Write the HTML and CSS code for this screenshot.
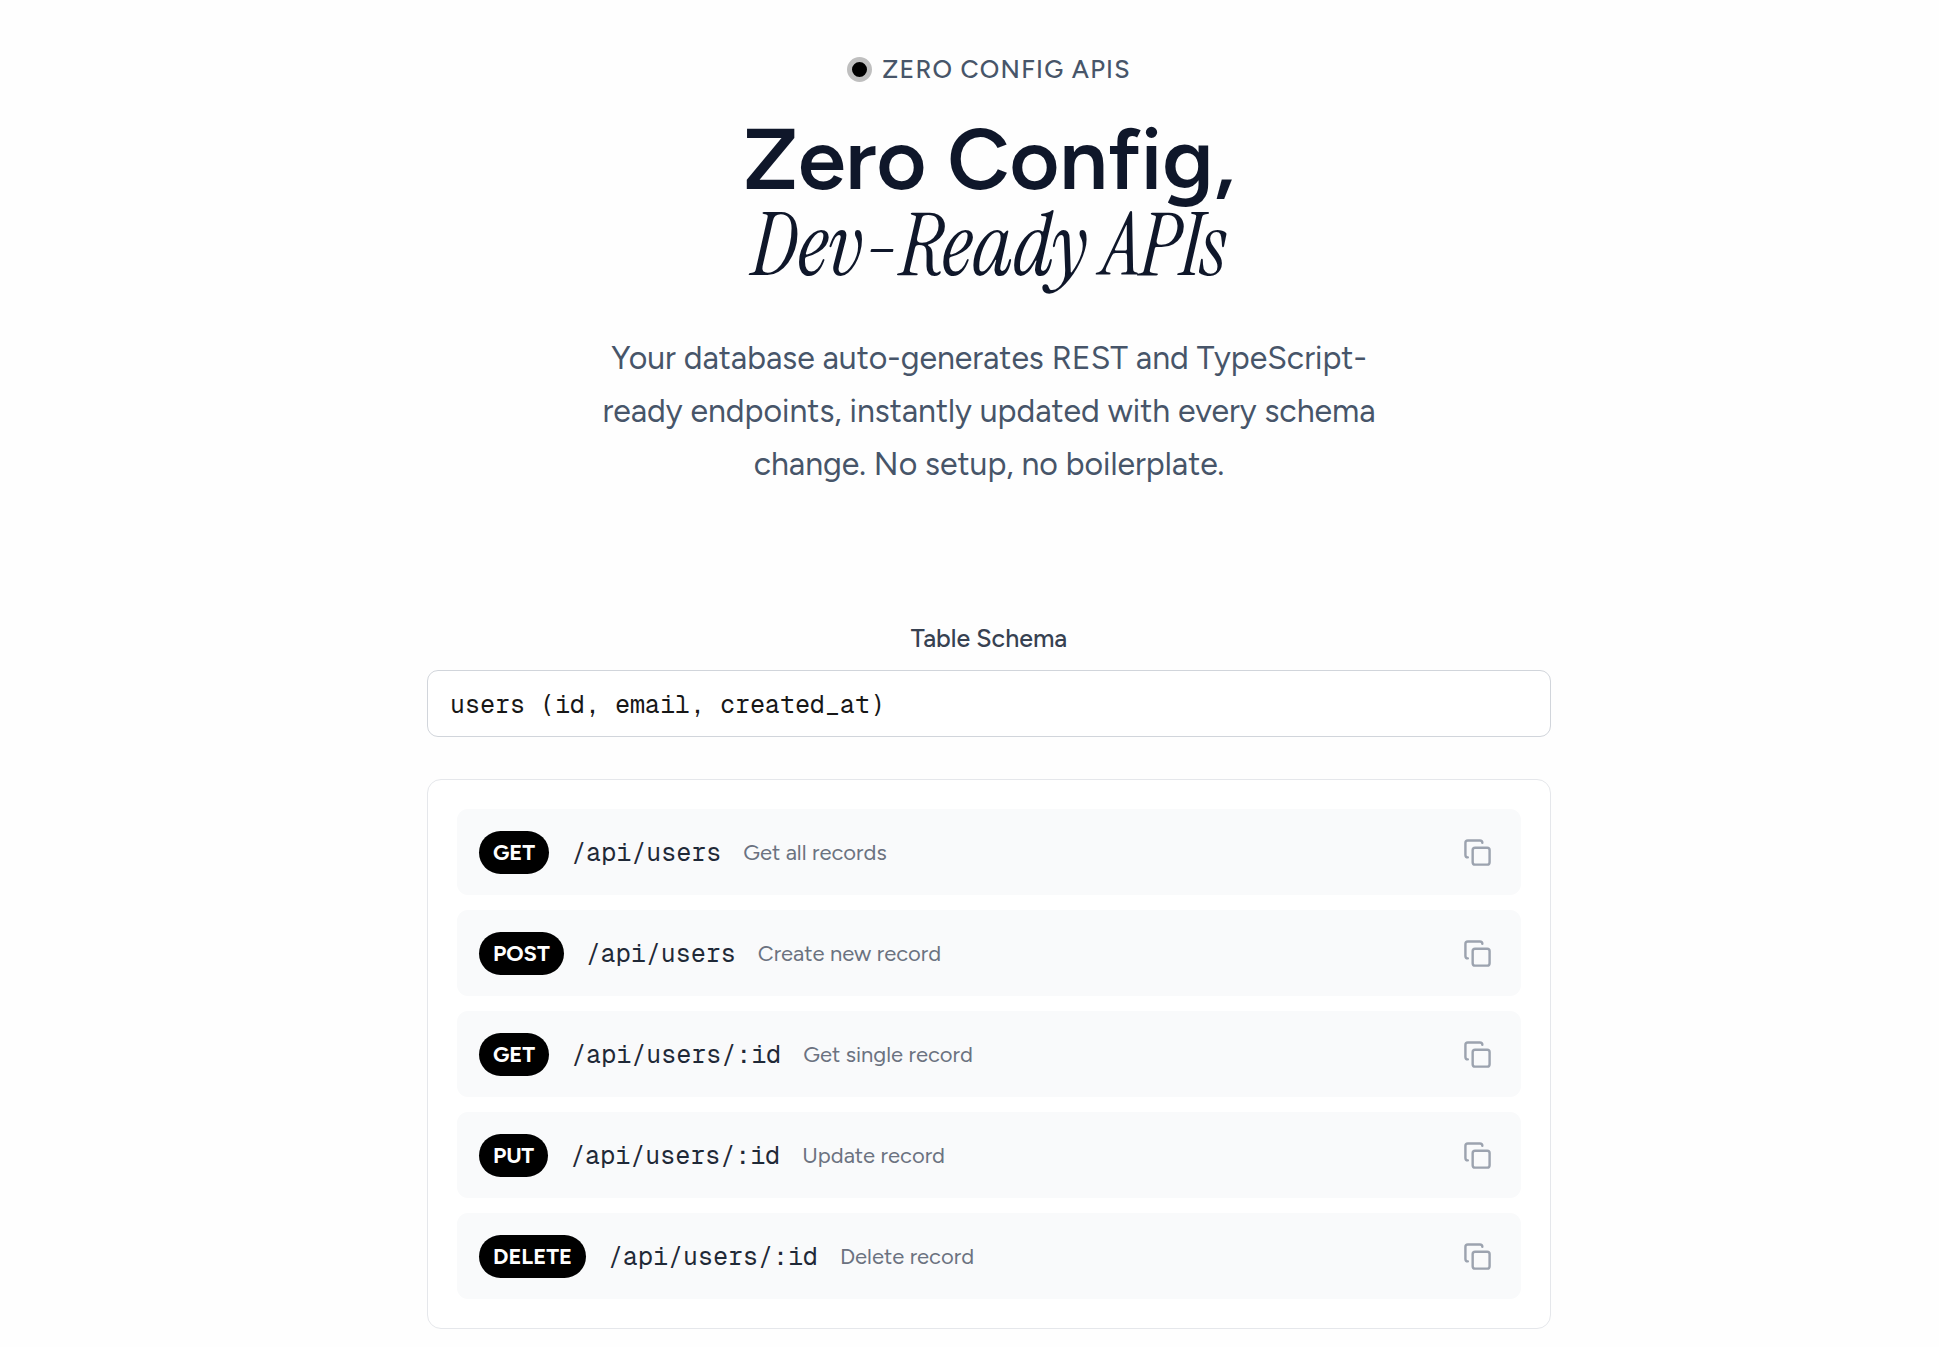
FILE: index.html
```html
<!DOCTYPE html>
<html lang="en">
<head>
    <meta charset="UTF-8">
    <meta name="viewport" content="width=device-width, initial-scale=1.0">
    <title>Zero Config APIs</title>
    <link rel="stylesheet" href="styles.css">
</head>
<body>
    <svg class="sprite" aria-hidden="true">
        <symbol id="icon-copy" viewBox="0 0 24 24">
            <rect x="8" y="8" width="14" height="14" rx="2" ry="2"></rect>
            <path d="M4 16c-1.1 0-2-.9-2-2V4c0-1.1.9-2 2-2h10c1.1 0 2 .9 2 2"></path>
        </symbol>
    </svg>

    <main class="container">
        <header class="hero">
            <p class="eyebrow"><span class="dot"></span>ZERO CONFIG APIS</p>
            <h1 class="title">Zero Config,<br><em>Dev-Ready APIs</em></h1>
            <p class="lead">Your database auto-generates REST and TypeScript-ready endpoints, instantly updated with every schema change. No setup, no boilerplate.</p>
        </header>

        <section class="demo">
            <label class="schema-label" for="schema">Table Schema</label>
            <input class="schema-input" type="text" id="schema" value="users (id, email, created_at)" spellcheck="false">

            <ul class="endpoints">
                <li class="endpoint">
                    <span class="method">GET</span>
                    <code class="path">/api/users</code>
                    <span class="description">Get all records</span>
                    <button class="copy-btn" type="button" aria-label="Copy"><svg class="icon"><use href="#icon-copy"></use></svg></button>
                </li>
                <li class="endpoint">
                    <span class="method">POST</span>
                    <code class="path">/api/users</code>
                    <span class="description">Create new record</span>
                    <button class="copy-btn" type="button" aria-label="Copy"><svg class="icon"><use href="#icon-copy"></use></svg></button>
                </li>
                <li class="endpoint">
                    <span class="method">GET</span>
                    <code class="path">/api/users/:id</code>
                    <span class="description">Get single record</span>
                    <button class="copy-btn" type="button" aria-label="Copy"><svg class="icon"><use href="#icon-copy"></use></svg></button>
                </li>
                <li class="endpoint">
                    <span class="method">PUT</span>
                    <code class="path">/api/users/:id</code>
                    <span class="description">Update record</span>
                    <button class="copy-btn" type="button" aria-label="Copy"><svg class="icon"><use href="#icon-copy"></use></svg></button>
                </li>
                <li class="endpoint">
                    <span class="method">DELETE</span>
                    <code class="path">/api/users/:id</code>
                    <span class="description">Delete record</span>
                    <button class="copy-btn" type="button" aria-label="Copy"><svg class="icon"><use href="#icon-copy"></use></svg></button>
                </li>
            </ul>
        </section>
    </main>
</body>
</html>
```
FILE: styles.css
```css
* {
    box-sizing: border-box;
}
body {
    margin: 0;
    padding: 50px 0 16px 39px;
    background: #fefefe;
    color: #0f172a;
    font-family: Figtree, Lato, sans-serif;
}
h1, p, ul {
    margin: 0;
    padding: 0;
}
.sprite {
    display: none;
}
.container {
    max-width: 1124px;
    margin: 0 auto;
}
.hero {
    text-align: center;
}
.eyebrow {
    display: flex;
    align-items: center;
    justify-content: center;
    gap: 10px;
    font-size: 25px;
    font-weight: 500;
    line-height: 38px;
    letter-spacing: 0.05em;
    color: #475569;
}
.dot {
    width: 25px;
    height: 25px;
    border: 5px solid #bfbfbf;
    border-radius: 50%;
    background: #000;
}
.title {
    margin-top: 28px;
    font-size: 86px;
    font-weight: 600;
    line-height: 86px;
}
.title em {
    font-family: "Instrument Serif", "Liberation Serif", serif;
    font-weight: 400;
}
.lead {
    max-width: 800px;
    margin: 43px auto 0;
    font-size: 32px;
    line-height: 53px;
    color: #475569;
}
.demo {
    margin-top: 129px;
}
.schema-label {
    display: block;
    margin-bottom: 14px;
    font-size: 25px;
    font-weight: 500;
    line-height: 36px;
    text-align: center;
    color: #374151;
}
.schema-input {
    display: block;
    width: 100%;
    height: 67px;
    padding: 0 22px;
    border: 1px solid #d1d5db;
    border-radius: 11px;
    background: #fff;
    color: #171717;
    font-family: "Geist Mono", "Liberation Mono", monospace;
    font-size: 25px;
}
.endpoints {
    display: flex;
    flex-direction: column;
    gap: 15px;
    margin-top: 42px;
    padding: 29px;
    border: 1px solid #e5e7eb;
    border-radius: 14px;
    background: #fff;
    list-style: none;
}
.endpoint {
    display: flex;
    align-items: center;
    gap: 22px;
    height: 86px;
    padding: 0 22px;
    border-radius: 11px;
    background: #f9fafb;
}
.method {
    padding: 0 14px;
    border-radius: 22px;
    background: #000;
    color: #fff;
    font-size: 22px;
    font-weight: 700;
    line-height: 43px;
}
.path {
    font-family: "Geist Mono", "Liberation Mono", monospace;
    font-size: 25px;
    color: #1f2937;
}
.description {
    font-size: 22px;
    color: #6b7280;
}
.copy-btn {
    display: flex;
    margin-left: auto;
    padding: 7px;
    border: none;
    border-radius: 6px;
    background: none;
    color: #9ca3af;
    cursor: pointer;
}
.copy-btn:hover {
    color: #4b5563;
}
.icon {
    width: 29px;
    height: 29px;
    fill: none;
    stroke: currentColor;
    stroke-width: 2;
    stroke-linecap: round;
    stroke-linejoin: round;
}
```
